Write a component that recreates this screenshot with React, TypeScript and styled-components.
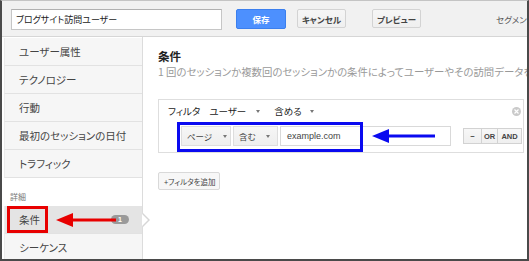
import React from "react";
import styled, { createGlobalStyle } from "styled-components";

const Global = createGlobalStyle`
  html, body { margin: 0; padding: 0; background: #fff; }
  body {
    font-family: "Noto Sans CJK JP", "Noto Sans", sans-serif;
    font-feature-settings: "palt";
    color: #444;
  }
  * { box-sizing: border-box; }
`;

const Frame = styled.div`
  position: relative;
  width: 529px;
  height: 261px;
  border: 2px solid #4a4a4a;
  border-top: 1px solid #c4c4c4;
  overflow: hidden;
  display: flex;
  flex-direction: column;
  background: #fff;
`;

const TopBar = styled.div`
  height: 36px;
  flex: none;
  background: #f1f1f1;
  border-bottom: 1px solid #d6d6d6;
  display: flex;
  align-items: flex-start;
  padding: 8px 0 0 9px;
  white-space: nowrap;
  overflow: hidden;
  & > * { flex: none; }
`;

const NameInput = styled.div`
  width: 211px;
  height: 21px;
  background: #fff;
  border: 1px solid #c6c6c6;
  border-top-color: #b0b0b0;
  font-size: 9px;
  line-height: 19px;
  padding-left: 4px;
  color: #222;
`;

const BaseButton = styled.div<{ $ml: number; $w: number }>`
  margin-left: ${(p) => p.$ml}px;
  width: ${(p) => p.$w}px;
  height: 20px;
  border-radius: 2px;
  display: flex;
  align-items: center;
  justify-content: center;
  font-size: 8.5px;
  font-weight: 700;
`;

const PrimaryButton = styled(BaseButton)`
  background: #4d90fe;
  border: 1px solid #3b7fee;
  color: #fff;
`;

const GrayButton = styled(BaseButton)`
  height: 19px;
  background: linear-gradient(#f6f6f6, #efefef);
  border: 1px solid #d3d3d3;
  color: #444;
`;

const DestLabel = styled.div`
  margin-left: 75px;
  font-size: 8.5px;
  line-height: 20px;
  color: #555;
`;

const Body = styled.div`
  flex: 1;
  display: flex;
  min-height: 0;
`;

const Sidebar = styled.div`
  width: 141px;
  flex: none;
  border-right: 1px solid #dcdcdc;
  padding: 1px 0 0 2px;
  display: flex;
  flex-direction: column;
  position: relative;
`;

const NavItem = styled.div<{ $active?: boolean }>`
  height: 28px;
  flex: none;
  display: flex;
  align-items: center;
  padding-left: 14px;
  font-size: 10.5px;
  color: #444;
  background: ${(p) => (p.$active ? "#e4e4e4" : "#f6f6f6")};
  border-bottom: 1px solid #e2e2e2;
  border-left: 1px solid #ececec;
  position: relative;
`;

const SectionLabel = styled.div`
  height: 28px;
  flex: none;
  display: flex;
  align-items: flex-end;
  padding: 0 0 4px 6px;
  font-size: 8px;
  color: #777;
`;

const Badge = styled.span`
  position: absolute;
  left: 106px;
  top: 9px;
  width: 18px;
  height: 9px;
  border-radius: 5px;
  background: #9a9a9a;
  color: #fff;
  font-family: "Liberation Sans", sans-serif;
  font-weight: 700;
  font-size: 7px;
  line-height: 9px;
  text-align: center;
`;

const Notch = styled.span`
  position: absolute;
  right: -8px;
  top: 7px;
  width: 0;
  height: 0;
  border-top: 7px solid transparent;
  border-bottom: 7px solid transparent;
  border-left: 7px solid #d6d6d6;
  &::after {
    content: "";
    position: absolute;
    left: -8px;
    top: -6px;
    border-top: 6px solid transparent;
    border-bottom: 6px solid transparent;
    border-left: 6px solid #fff;
  }
`;

const Content = styled.div`
  flex: 1;
  min-width: 0;
  padding-left: 15px;
  display: flex;
  flex-direction: column;
  white-space: nowrap;
`;

const Title = styled.div`
  margin-top: 12px;
  height: 14px;
  line-height: 14px;
  font-size: 11.5px;
  font-weight: 700;
  color: #222;
`;

const Desc = styled.div`
  margin-top: 2px;
  height: 13px;
  line-height: 13px;
  font-size: 10.4px;
  color: #999;
`;

const FilterBox = styled.div`
  margin-top: 21px;
  width: 366px;
  height: 54px;
  flex: none;
  border: 1px solid #dedede;
  display: flex;
  flex-direction: column;
`;

const FilterHead = styled.div`
  height: 22px;
  display: flex;
  align-items: center;
  padding-left: 9px;
  font-size: 9.5px;
  color: #222;
`;

const HeadText = styled.span<{ $ml?: number }>`
  margin-left: ${(p) => p.$ml ?? 0}px;
`;

const Caret = styled.span<{ $ml?: number }>`
  display: inline-block;
  margin-left: ${(p) => p.$ml ?? 0}px;
  width: 0;
  height: 0;
  border-left: 2.5px solid transparent;
  border-right: 2.5px solid transparent;
  border-top: 3px solid #777;
`;

const CloseIcon = styled.span`
  margin-left: auto;
  margin-right: 2px;
  width: 9px;
  height: 9px;
  border-radius: 50%;
  background: #cacaca;
  display: flex;
  align-items: center;
  justify-content: center;
`;

const FilterRow = styled.div`
  height: 30px;
  display: flex;
  align-items: center;
  padding-left: 22px;
  padding-bottom: 2px;
  & > * { flex: none; }
`;

const Select = styled.div<{ $w: number; $ml?: number }>`
  width: ${(p) => p.$w}px;
  margin-left: ${(p) => p.$ml ?? 0}px;
  height: 20px;
  background: linear-gradient(#f6f6f6, #eeeeee);
  border: 1px solid #dddddd;
  display: flex;
  align-items: center;
  padding-left: 5px;
  font-size: 8.5px;
  color: #444;
`;

const ValueInput = styled.div`
  margin-left: 2px;
  width: 171px;
  height: 20px;
  border: 1px solid #d9d9d9;
  background: #fff;
  font-family: "Liberation Sans", sans-serif;
  font-size: 9px;
  line-height: 18px;
  padding-left: 6px;
  color: #444;
`;

const OpGroup = styled.div`
  margin-left: 13px;
  display: flex;
  height: 16px;
`;

const OpButton = styled.div<{ $w: number }>`
  width: ${(p) => p.$w}px;
  height: 16px;
  background: linear-gradient(#f7f7f7, #efefef);
  border: 1px solid #d2d2d2;
  margin-left: -1px;
  display: flex;
  align-items: center;
  justify-content: center;
  font-family: "Liberation Sans", sans-serif;
  font-weight: 700;
  font-size: 7.5px;
  color: #444;
`;

const AddButton = styled.div`
  margin-top: 19px;
  width: 62px;
  height: 18px;
  flex: none;
  border: 1px solid #d9d9d9;
  border-radius: 2px;
  background: #f7f7f7;
  display: flex;
  align-items: center;
  padding-left: 5px;
  font-size: 7.5px;
  color: #444;
`;

const Overlay = styled.div<{ $x: number; $y: number }>`
  position: absolute;
  left: ${(p) => p.$x - 2}px;
  top: ${(p) => p.$y - 1}px;
  pointer-events: none;
`;

const MarkBox = styled(Overlay)<{ $w: number; $h: number; $c: string }>`
  width: ${(p) => p.$w}px;
  height: ${(p) => p.$h}px;
  border: 3px solid ${(p) => p.$c};
`;

function Arrow({ x, y, len, color }: { x: number; y: number; len: number; color: string }) {
  return (
    <Overlay $x={x} $y={y}>
      <svg width={len} height={16} viewBox={`0 0 ${len} 16`} style={{ display: "block" }}>
        <polygon points="0,8 17,1 17,15" fill={color} />
        <rect x={15} y={6.5} width={len - 15} height={3} fill={color} />
      </svg>
    </Overlay>
  );
}

const navTop = ["ユーザー属性", "テクノロジー", "行動", "最初のセッションの日付", "トラフィック"];

export default function App() {
  return (
    <>
      <Global />
      <Frame>
        <TopBar>
          <NameInput>ブログサイト訪問ユーザー</NameInput>
          <PrimaryButton $ml={14} $w={50}>保存</PrimaryButton>
          <GrayButton $ml={11} $w={49}>キャンセル</GrayButton>
          <GrayButton $ml={26} $w={49}>プレビュー</GrayButton>
          <DestLabel>セグメン</DestLabel>
        </TopBar>
        <Body>
          <Sidebar>
            {navTop.map((t) => (
              <NavItem key={t}>{t}</NavItem>
            ))}
            <SectionLabel>詳細</SectionLabel>
            <NavItem $active>
              条件
              <Badge>1</Badge>
              <Notch />
            </NavItem>
            <NavItem>シーケンス</NavItem>
          </Sidebar>
          <Content>
            <Title>条件</Title>
            <Desc>1 回のセッションか複数回のセッションかの条件によってユーザーやその訪問データを</Desc>
            <FilterBox>
              <FilterHead>
                <HeadText>フィルタ</HeadText>
                <HeadText $ml={9}>ユーザー</HeadText>
                <Caret $ml={10} />
                <HeadText $ml={14}>含める</HeadText>
                <Caret $ml={8} />
                <CloseIcon>
                  <svg width="5" height="5" viewBox="0 0 5 5">
                    <path d="M0.5 0.5 L4.5 4.5 M4.5 0.5 L0.5 4.5" stroke="#fff" strokeWidth="1.2" />
                  </svg>
                </CloseIcon>
              </FilterHead>
              <FilterRow>
                <Select $w={50}>
                  ページ
                  <Caret $ml={11} />
                </Select>
                <Select $w={45} $ml={2}>
                  含む
                  <Caret $ml={10} />
                </Select>
                <ValueInput>example.com</ValueInput>
                <OpGroup>
                  <OpButton $w={19}>−</OpButton>
                  <OpButton $w={17}>OR</OpButton>
                  <OpButton $w={25}>AND</OpButton>
                </OpGroup>
              </FilterRow>
            </FilterBox>
            <AddButton>+フィルタを追加</AddButton>
          </Content>
        </Body>
        <MarkBox $x={177} $y={122} $w={186} $h={30} $c="#0a0af0" />
        <Arrow x={372} y={128} len={63} color="#0a0af0" />
        <MarkBox $x={7} $y={206} $w={41} $h={27} $c="#e80000" />
        <Arrow x={56} y={212} len={60} color="#e80000" />
      </Frame>
    </>
  );
}
